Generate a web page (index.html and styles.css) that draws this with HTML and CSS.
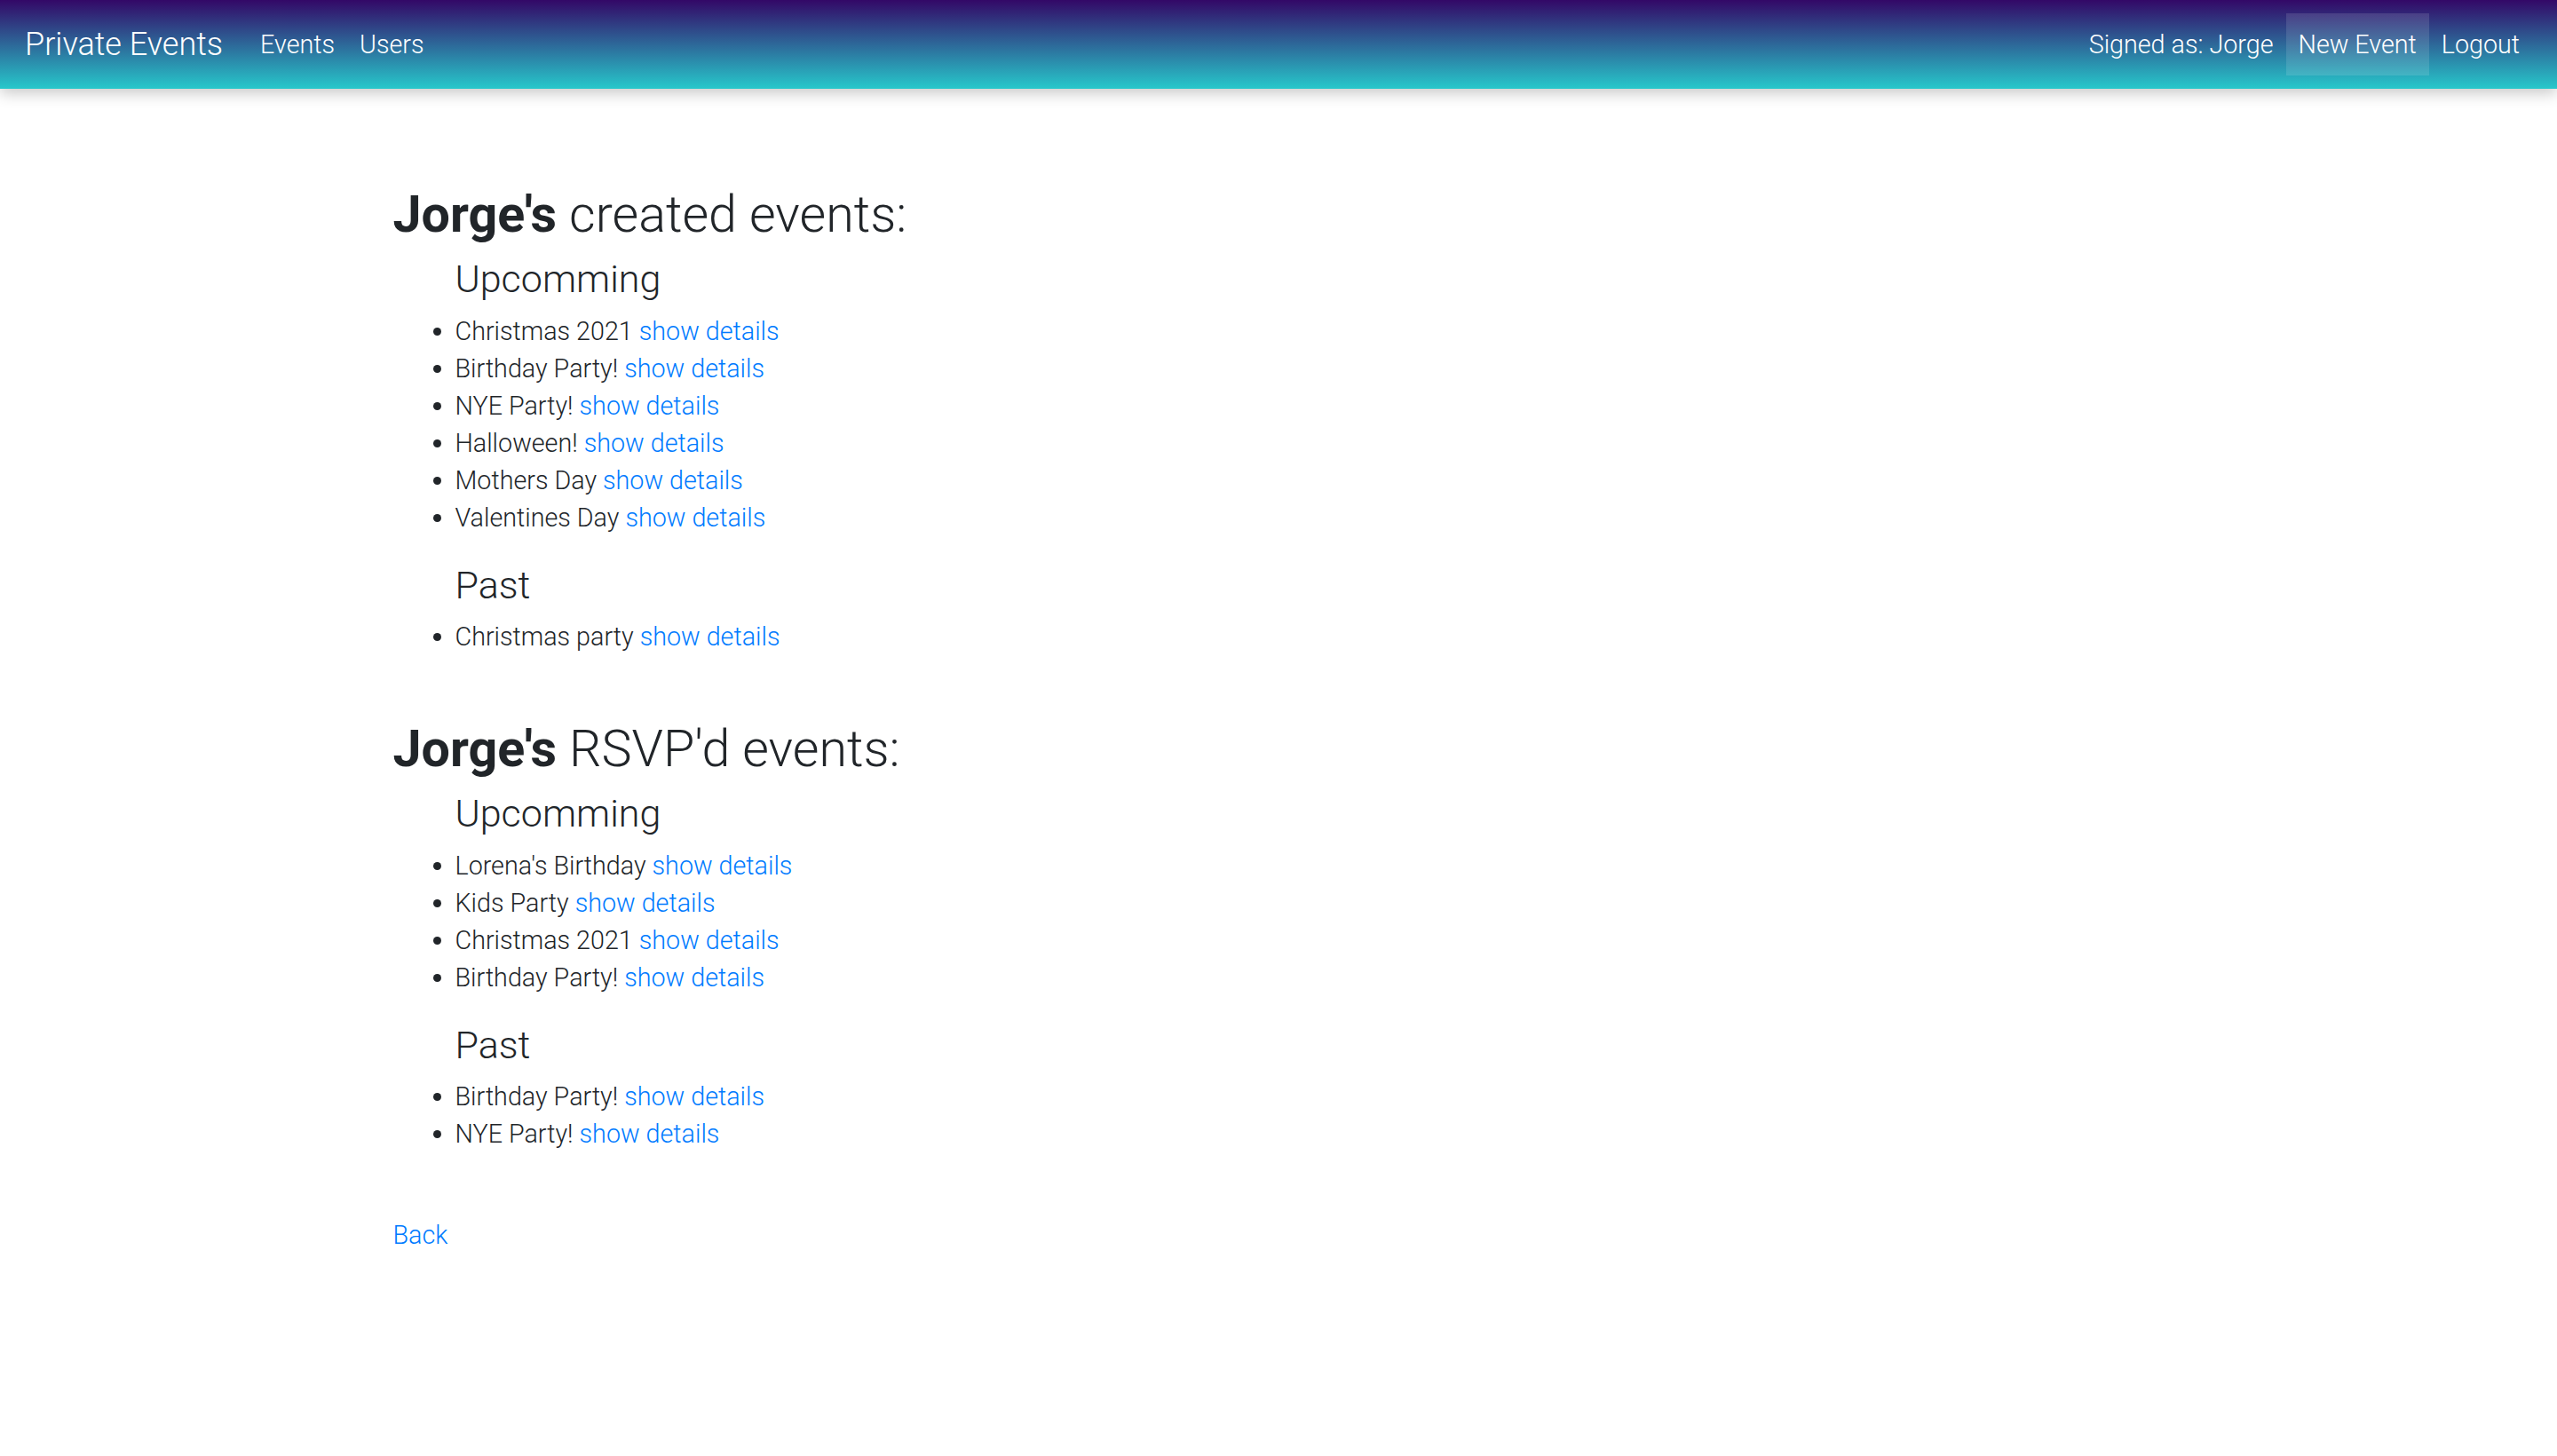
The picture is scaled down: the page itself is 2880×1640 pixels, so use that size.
FILE: index.html
```html
<!DOCTYPE html>
<html lang="en">
<head>
<meta charset="utf-8">
<title>Private Events</title>
<link rel="stylesheet" href="styles.css">
</head>
<body>
<nav class="navbar">
  <a class="brand" href="#">Private Events</a>
  <div class="nav-left">
    <a class="nav-link" href="#">Events</a>
    <a class="nav-link" href="#">Users</a>
  </div>
  <div class="nav-right">
    <span class="nav-link">Signed as: Jorge</span>
    <a class="nav-link active" href="#">New Event</a>
    <a class="nav-link" href="#">Logout</a>
  </div>
</nav>

<main class="container">
  <section class="event-group">
    <h2 class="group-title"><strong>Jorge's</strong> created events:</h2>
    <div class="sublists">
      <h4 class="sub-title">Upcomming</h4>
      <ul class="events">
        <li>Christmas 2021 <a href="#">show details</a></li>
        <li>Birthday Party! <a href="#">show details</a></li>
        <li>NYE Party! <a href="#">show details</a></li>
        <li>Halloween! <a href="#">show details</a></li>
        <li>Mothers Day <a href="#">show details</a></li>
        <li>Valentines Day <a href="#">show details</a></li>
      </ul>
      <h4 class="sub-title">Past</h4>
      <ul class="events">
        <li>Christmas party <a href="#">show details</a></li>
      </ul>
    </div>
  </section>

  <section class="event-group">
    <h2 class="group-title"><strong>Jorge's</strong> RSVP'd events:</h2>
    <div class="sublists">
      <h4 class="sub-title">Upcomming</h4>
      <ul class="events">
        <li>Lorena's Birthday <a href="#">show details</a></li>
        <li>Kids Party <a href="#">show details</a></li>
        <li>Christmas 2021 <a href="#">show details</a></li>
        <li>Birthday Party! <a href="#">show details</a></li>
      </ul>
      <h4 class="sub-title">Past</h4>
      <ul class="events">
        <li>Birthday Party! <a href="#">show details</a></li>
        <li>NYE Party! <a href="#">show details</a></li>
      </ul>
    </div>
  </section>

  <a class="back" href="#">Back</a>
</main>
</body>
</html>
```

FILE: styles.css
```css
* {
  box-sizing: border-box;
}

html, body {
  margin: 0;
  padding: 0;
  background: #fff;
}

body {
  font-family: "Roboto Light", Roboto, "Liberation Sans", sans-serif;
  font-weight: 300;
  font-size: 28.7px;
  line-height: 42px;
  color: #212529;
}

a {
  color: #007bff;
  text-decoration: none;
}

.navbar {
  position: relative;
  display: flex;
  align-items: center;
  height: 100px;
  padding: 0 28px;
  background: linear-gradient(to bottom, #330867 0%, #27c8cb 100%);
  box-shadow: 0 5px 16px rgba(0, 0, 0, 0.22);
}

.brand {
  color: #fff;
  font-size: 36px;
  line-height: 52px;
  padding: 11px 0;
  margin-right: 28px;
  white-space: nowrap;
}

.nav-left,
.nav-right {
  display: flex;
  align-items: center;
}

.nav-right {
  margin-left: auto;
}

.nav-link {
  color: #fff;
  font-size: 28.7px;
  line-height: 42px;
  padding: 14px 14px;
  white-space: nowrap;
}

.nav-link.active {
  background: rgba(255, 255, 255, 0.12);
}

.container {
  max-width: 1995px;
  margin: 0 auto;
  padding-top: 108px;
}

.event-group {
  padding-bottom: 42px;
}

.group-title {
  font-size: 57.4px;
  line-height: 67.2px;
  font-weight: 300;
  margin: 0 0 14px;
}

.group-title strong {
  font-family: Roboto, "Liberation Sans", sans-serif;
  font-weight: 700;
}

.sublists {
  padding-left: 70px;
}

.sub-title {
  font-size: 43px;
  line-height: 50.4px;
  font-weight: 300;
  margin: 0 0 12px;
}

.events {
  margin: 0 0 30px;
  padding: 0;
  list-style: disc outside;
}

.back {
  display: inline-block;
}
```
